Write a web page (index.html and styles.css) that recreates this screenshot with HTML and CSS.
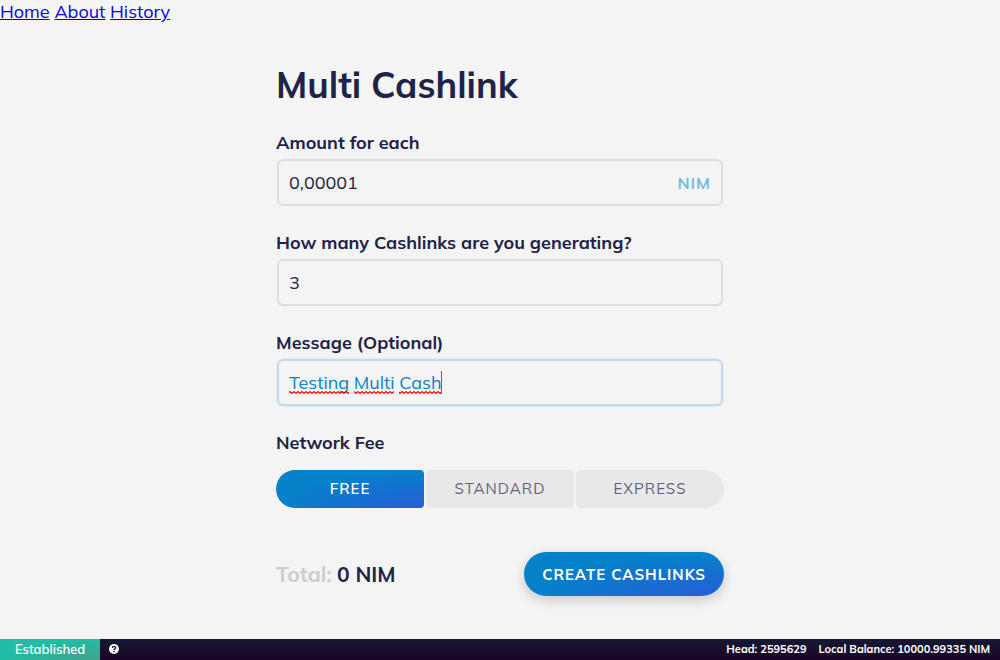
FILE: index.html
```html
<!DOCTYPE html>
<html lang="en">
<head>
<meta charset="utf-8">
<meta name="viewport" content="width=device-width, initial-scale=1">
<title>Multi Cashlink</title>
<link rel="stylesheet" href="styles.css">
</head>
<body>
<nav class="nav">
  <a href="#home">Home</a>
  <a href="#about">About</a>
  <a href="#history">History</a>
</nav>
<main class="main">
  <form class="form">
    <h1 class="title">Multi Cashlink</h1>
    <div class="field">
      <label class="label" for="amount">Amount for each</label>
      <div class="box">
        <input class="input" id="amount" type="text" value="0,00001">
        <span class="unit">NIM</span>
      </div>
    </div>
    <div class="field">
      <label class="label" for="count">How many Cashlinks are you generating?</label>
      <div class="box"><input class="input" id="count" type="text" value="3"></div>
    </div>
    <div class="field">
      <label class="label" for="message">Message (Optional)</label>
      <div class="box box-active">
        <input class="input" id="message" type="text" value="Testing Multi Cash">
        <svg class="marks" width="156" height="24" viewBox="0 0 156 24" aria-hidden="true">
          <defs>
            <pattern id="wave" width="4" height="3" y="20" patternUnits="userSpaceOnUse">
              <path d="M-1 2.5L1 .5L3 2.5L5 .5" fill="none" stroke="#f00" stroke-width="1.1"/>
            </pattern>
          </defs>
          <path d="M0 20h60v3H0zM65 20h40v3H65zM110 20h42v3h-42z" fill="url(#wave)"/>
          <path d="M152 0h1v23h-1z" fill="#0582ca"/>
        </svg>
      </div>
    </div>
    <fieldset class="fees">
      <legend class="label">Network Fee</legend>
      <div class="fee-row">
        <label class="fee"><input class="radio" type="radio" name="fee" checked><span class="fee-text">FREE</span></label>
        <label class="fee"><input class="radio" type="radio" name="fee"><span class="fee-text">STANDARD</span></label>
        <label class="fee"><input class="radio" type="radio" name="fee"><span class="fee-text">EXPRESS</span></label>
      </div>
    </fieldset>
    <div class="footer">
      <div class="total"><span class="total-label">Total:</span> 0 NIM</div>
      <button class="create" type="button">CREATE CASHLINKS</button>
    </div>
  </form>
</main>
<footer class="status">
  <span class="state">Established</span>
  <svg class="help" width="10" height="10" viewBox="0 0 10 10" role="img" aria-label="Help">
    <circle cx="5" cy="5" r="5" fill="#fff"/>
    <path d="M3.4 3.9C3.4 1.9 6.6 1.9 6.6 3.8C6.6 4.8 5.2 4.9 5 6" fill="none" stroke="#151833" stroke-width="1.3"/>
    <circle cx="5" cy="7.6" r=".8" fill="#151833"/>
  </svg>
  <span class="info">Head: 2595629</span>
  <span>Local Balance: 10000.99335 NIM</span>
</footer>
</body>
</html>
```
FILE: styles.css
```css
* {
  box-sizing: border-box;
}

body {
  display: flex;
  flex-direction: column;
  min-height: 100vh;
  margin: 0;
  background: #f4f4f4;
  color: #1f2348;
  font-family: Muli, Mulish, "Open Sans", sans-serif;
  font-size: 18px;
}

.nav {
  height: 24px;
  line-height: 24px;
}

.nav a {
  color: #0000ee;
}

.main {
  flex: 1;
  padding: 37px 16px 40px;
}

.form {
  width: 100%;
  max-width: 448px;
  margin: 0 auto;
}

.title {
  margin: 0 0 24px;
  font-size: 36px;
  font-weight: 700;
  line-height: 48px;
}

.field {
  margin-bottom: 27px;
}

.label {
  display: block;
  padding: 0;
  font-size: 18px;
  font-weight: 700;
  line-height: 20px;
}

.box {
  position: relative;
  display: flex;
  align-items: center;
  height: 47px;
  margin: 6px 1px 0;
  padding: 0 10px;
  border: 2px solid #dddde2;
  border-radius: 6px;
}

.box-active {
  border-color: #c3dcea;
  box-shadow: 0 0 0 1px #e3edf2;
}

.input {
  flex: 1;
  min-width: 0;
  padding: 0;
  border: 0;
  outline: 0;
  background: transparent;
  color: #1f2348;
  font-family: inherit;
  font-size: 18px;
  line-height: 24px;
}

.box-active .input {
  color: #0582ca;
}

.unit {
  color: #77bade;
  font-size: 16px;
  font-weight: 700;
  letter-spacing: 1px;
}

.marks {
  position: absolute;
  top: 10px;
  left: 10px;
}

.fees {
  min-width: 0;
  margin: 0;
  padding: 0;
  border: 0;
}

.fee-row {
  display: grid;
  grid-template-columns: repeat(3, 1fr);
  gap: 2px;
  margin-top: 17px;
}

.fee {
  position: relative;
  border-radius: 4px;
  overflow: hidden;
}

.fee:first-child {
  border-radius: 19px 4px 4px 19px;
}

.fee:last-child {
  border-radius: 4px 19px 19px 4px;
}

.radio {
  position: absolute;
  margin: 0;
  opacity: 0;
}

.fee-text {
  display: block;
  background: #e8e8ea;
  color: #626379;
  font-size: 15px;
  letter-spacing: 1px;
  line-height: 38px;
  text-align: center;
}

.radio:checked + .fee-text {
  background: radial-gradient(100% 100% at 100% 100%, #265dd7 0%, #0582ca 100%);
  color: #fff;
  font-weight: 600;
}

.footer {
  display: flex;
  align-items: center;
  justify-content: space-between;
  margin-top: 44px;
}

.total {
  font-size: 21px;
  font-weight: 700;
}

.total-label {
  color: #cccccc;
}

.create {
  height: 44px;
  padding: 0 18px;
  border: 0;
  border-radius: 22px;
  background: radial-gradient(100% 100% at 100% 100%, #265dd7 0%, #0582ca 100%);
  box-shadow: 0 4px 12px rgba(0, 0, 0, 0.18);
  color: #fff;
  font-family: inherit;
  font-size: 15px;
  font-weight: 700;
  letter-spacing: 1px;
}

.status {
  display: flex;
  height: 21px;
  padding-right: 10px;
  background: linear-gradient(#151833, #1c0527);
  color: #fff;
  font-size: 11px;
  font-weight: 700;
  line-height: 21px;
}

.state {
  width: 100px;
  background: radial-gradient(100% 100% at 100% 100%, #41a38e 0%, #21bca5 100%);
  font-size: 13px;
  font-weight: 600;
  text-align: center;
}

.help {
  margin: 5px 0 0 9px;
}

.info {
  margin: 0 12px 0 auto;
}
```
